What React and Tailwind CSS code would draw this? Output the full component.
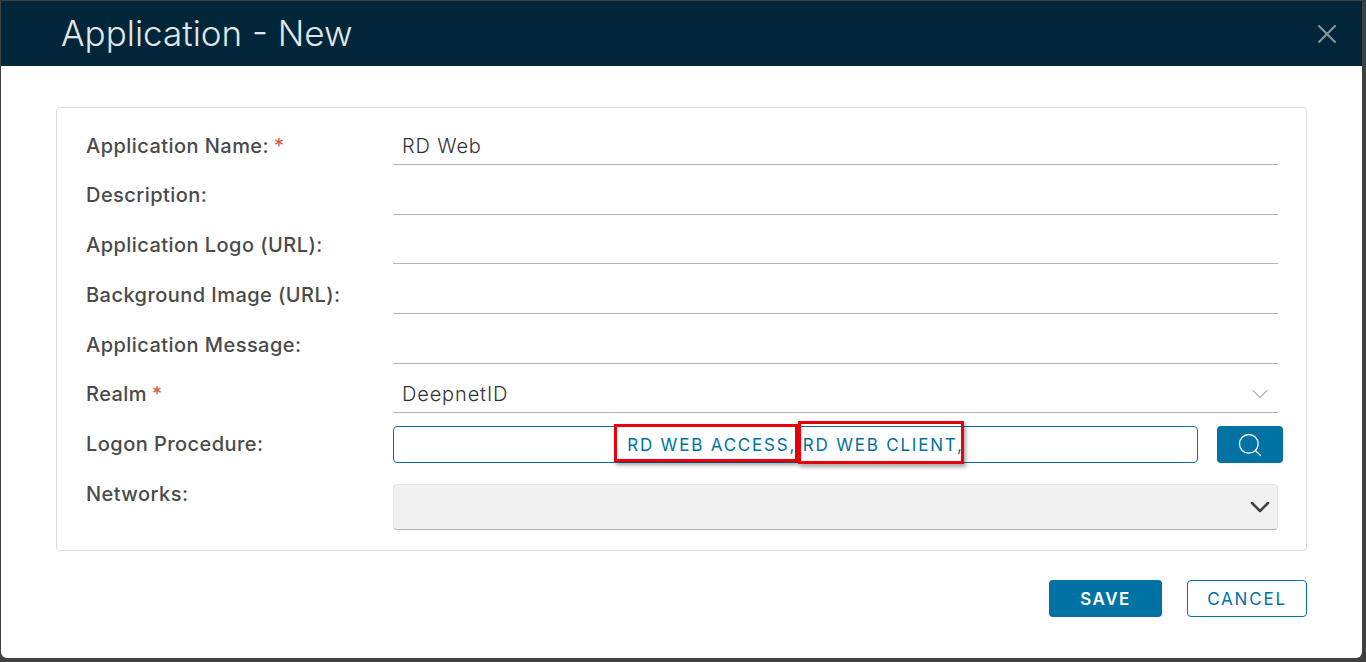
import React from 'react';
import { X, Search, ChevronDown } from 'lucide-react';

const FONT = "font-['Inter','Open_Sans',sans-serif]";

const Label = ({ text, required, offset = 'mt-[7px]' }) => (
  <div className={`w-[307px] shrink-0 text-[20px] leading-[24px] font-medium text-[#4a4a4a] tracking-[0.45px] ${offset}`}>
    {text}
    {required && <span className="ml-[5px] text-[#e0503f] font-normal">*</span>}
  </div>
);

// plain underlined field
const Field = ({ label, required, value, pitch, offset, children }) => (
  <div className={`flex items-start ${pitch}`}>
    <Label text={label} required={required} offset={offset} />
    <div className="w-[885px] h-[38px] border-b border-[#b3b3b3] flex items-center justify-between pl-[9px] pr-[4px] text-[20px] font-light tracking-[0.85px] text-[#333333]">
      <span>{value}</span>
      {children}
    </div>
  </div>
);

export default function App() {
  return (
    <div className={`w-[1366px] h-[662px] bg-[#404040] pt-[1px] pl-[1px] overflow-hidden ${FONT}`}>
      <div className="w-[1361px] h-[657px] bg-white rounded-br-[6px] rounded-bl-[6px] overflow-hidden">
        {/* header */}
        <div className="h-[65px] bg-[#012639] flex items-center justify-between pl-[60px] pr-[19px]">
          <h1 className="text-[35px] font-light text-[#e3e6e8] leading-none">Application - New</h1>
          <X size={32} strokeWidth={1.4} className="text-[#8f979c]" />
        </div>

        {/* form card */}
        <div className="ml-[55px] mt-[41px] w-[1251px] h-[444px] border border-[#dddddd] rounded-[4px] pt-[19px] pl-[29px]">
          <Field label="Application Name:" required value="RD Web" pitch="h-[50px]" />
          <Field label="Description:" pitch="h-[49px]" offset="mt-[6px]" />
          <Field label="Application Logo (URL):" pitch="h-[50px]" />
          <Field label="Background Image (URL):" pitch="h-[50px]" />
          <Field label="Application Message:" pitch="h-[49px]" />
          <Field label="Realm" required value="DeepnetID" pitch="h-[51px]">
            <ChevronDown size={28} strokeWidth={1} className="text-[#b5b5b5]" />
          </Field>

          <div className="flex items-start h-[58px]">
            <Label text="Logon Procedure:" offset="mt-[6px]" />
            <div className="relative w-[805px] h-[37px] border border-[#0072a3] rounded-[4px] pt-[2px] flex items-center justify-center text-[17px] tracking-[1.8px] text-[#0072a3]">
              <span>RD WEB ACCESS, RD WEB CLIENT,</span>
              {/* annotation boxes over the value */}
              <div className="absolute left-[220px] top-[-3px] w-[184px] h-[38px] border-[3px] border-[#e8000b] shadow-[2px_3px_4px_rgba(0,0,0,0.35)]" />
              <div className="absolute left-[404px] top-[-6px] w-[166px] h-[43px] border-[3px] border-[#e8000b] shadow-[2px_3px_4px_rgba(0,0,0,0.35)]" />
            </div>
            <button className="ml-[19px] w-[66px] h-[37px] bg-[#0072a3] rounded-[4px] flex items-center justify-center">
              <Search size={28} strokeWidth={1.1} className="text-white" />
            </button>
          </div>

          <div className="flex items-start">
            <Label text="Networks:" offset="-mt-[2px]" />
            <div className="w-[885px] h-[46px] bg-[#f1f1f1] border border-[#e6e6e6] border-b-[#b3b3b3] rounded-[4px] flex items-center justify-end pr-[1px]">
              <ChevronDown size={32} strokeWidth={1.9} className="text-[#404040]" />
            </div>
          </div>
        </div>

        {/* footer actions */}
        <div className="flex justify-end gap-[25px] mt-[29px] mr-[55px]">
          <button className="w-[113px] h-[37px] bg-[#0072a3] rounded-[4px] pt-[2px] text-white text-[17px] font-semibold tracking-[1.5px]">SAVE</button>
          <button className="w-[120px] h-[37px] border border-[#0072a3] rounded-[4px] pt-[2px] text-[#0072a3] text-[17px] tracking-[1.8px]">CANCEL</button>
        </div>
      </div>
    </div>
  );
}
